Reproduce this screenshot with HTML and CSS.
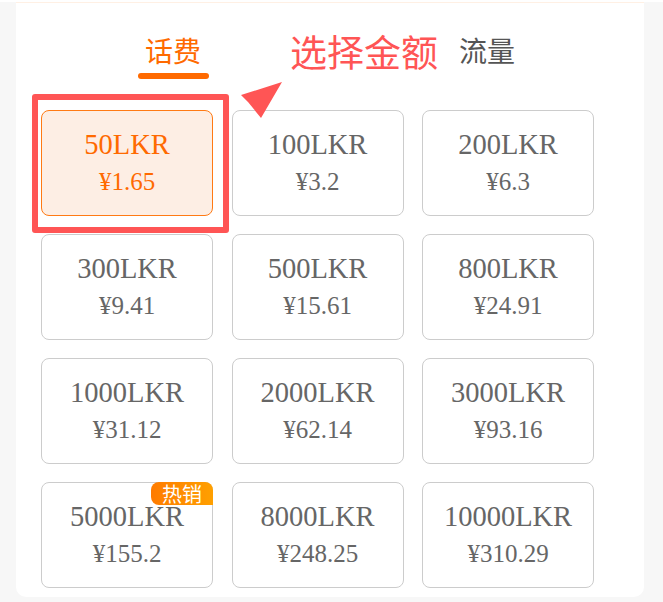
FILE: index.html
```html
<!doctype html>
<html lang="zh-CN">

<head>
    <meta charset="UTF-8">
    <title>充值</title>
    <link rel="stylesheet" href="styles.css">
</head>

<body>
    <div class="card">
        <div class="tabs">
            <div class="tab active">话费</div>
            <div class="tab">流量</div>
        </div>

        <div class="grid">
            <div class="item selected">
                <p class="amount">50LKR</p>
                <p class="price">¥1.65</p>
            </div>
            <div class="item">
                <p class="amount">100LKR</p>
                <p class="price">¥3.2</p>
            </div>
            <div class="item">
                <p class="amount">200LKR</p>
                <p class="price">¥6.3</p>
            </div>
            <div class="item">
                <p class="amount">300LKR</p>
                <p class="price">¥9.41</p>
            </div>
            <div class="item">
                <p class="amount">500LKR</p>
                <p class="price">¥15.61</p>
            </div>
            <div class="item">
                <p class="amount">800LKR</p>
                <p class="price">¥24.91</p>
            </div>
            <div class="item">
                <p class="amount">1000LKR</p>
                <p class="price">¥31.12</p>
            </div>
            <div class="item">
                <p class="amount">2000LKR</p>
                <p class="price">¥62.14</p>
            </div>
            <div class="item">
                <p class="amount">3000LKR</p>
                <p class="price">¥93.16</p>
            </div>
            <div class="item">
                <span class="hot">热销</span>
                <p class="amount">5000LKR</p>
                <p class="price">¥155.2</p>
            </div>
            <div class="item">
                <p class="amount">8000LKR</p>
                <p class="price">¥248.25</p>
            </div>
            <div class="item">
                <p class="amount">10000LKR</p>
                <p class="price">¥310.29</p>
            </div>
        </div>

        <!-- 标注 -->
        <div class="mark-box"></div>
        <div class="mark-text">选择金额</div>
        <svg class="mark-arrow" width="50" height="45" viewBox="0 0 50 45">
            <polygon points="46,4 5,17 12,24 25,40" fill="#ff5555" />
        </svg>
    </div>
</body>

</html>
```

FILE: styles.css
```css
body {
    margin: 0;
    border-top: 2px solid #fff;
    background: #f7f7f7;
    font-family: "Noto Sans CJK SC", "Noto Sans", sans-serif;
}

.card {
    position: relative;
    width: 628px;
    height: 595px;
    margin-left: 16px;
    box-sizing: border-box;
    padding: 29px 0 0 25px;
    border-top: 1px solid #fff0e4;
    border-radius: 0 0 10px 10px;
    background: #fff;
}

.tabs {
    display: flex;
    margin-left: -25px;
}

.tab {
    flex: 1;
    display: flex;
    flex-direction: column;
    align-items: center;
    font-size: 28px;
    line-height: 36px;
    color: #555;
}

.tab.active {
    color: #ff6a00;
}

.tab.active::after {
    content: "";
    width: 71px;
    height: 6px;
    margin-top: 5px;
    border-radius: 3px;
    background: #ff6a00;
}

.tab:not(.active)::after {
    content: "";
    height: 6px;
    margin-top: 5px;
}

.grid {
    display: grid;
    grid-template-columns: repeat(3, 172px);
    grid-auto-rows: 106px;
    gap: 18px 18.5px;
    margin-top: 31px;
}

.item {
    position: relative;
    display: flex;
    flex-direction: column;
    align-items: center;
    justify-content: center;
    box-sizing: border-box;
    border: 1px solid #ccc;
    border-radius: 8px;
    font-family: "Liberation Serif", serif;
    color: #666;
}

.item p {
    margin: 0;
}

.amount {
    font-size: 28.5px;
    line-height: 37px;
}

.price {
    font-size: 25px;
    line-height: 37px;
}

.item.selected {
    border-color: #ff7a14;
    background: #fdeee4;
    color: #ff6a00;
}

.hot {
    position: absolute;
    top: -1px;
    right: -1px;
    width: 62px;
    height: 23px;
    border-radius: 8px 8px 0 8px;
    background: linear-gradient(90deg, #ff7b00, #ffa000);
    font-family: "Noto Sans CJK SC", sans-serif;
    font-size: 20px;
    line-height: 23px;
    text-align: center;
    color: #fff;
}

.mark-box {
    position: absolute;
    left: 16px;
    top: 91px;
    width: 197px;
    height: 139px;
    box-sizing: border-box;
    border: 6px solid #ff5555;
    border-radius: 3px;
}

.mark-text {
    position: absolute;
    left: 274px;
    top: 28px;
    font-size: 37px;
    line-height: 40px;
    color: #ff5555;
}

.mark-arrow {
    position: absolute;
    left: 220px;
    top: 75px;
}
```
